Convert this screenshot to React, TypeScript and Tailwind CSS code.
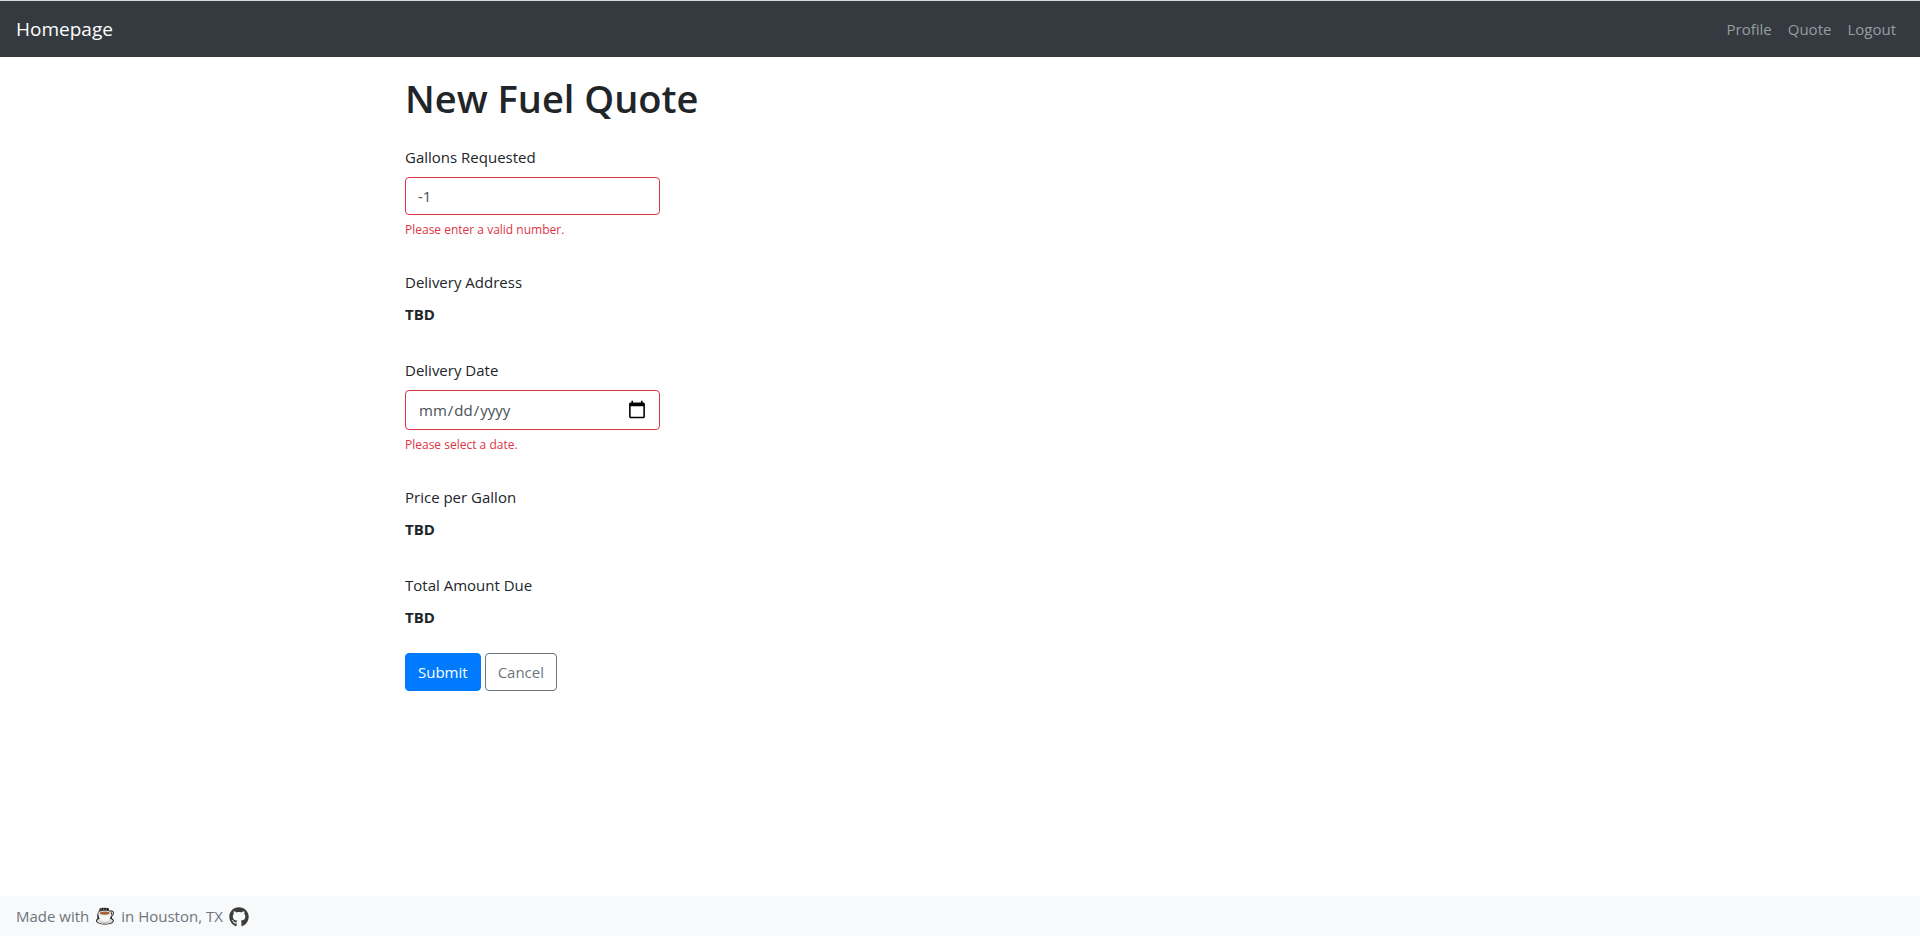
import type { ReactNode } from "react";
import { FaGithub } from "react-icons/fa";

const inputClass =
  "block w-full rounded border border-[#dc3545] bg-white px-3 text-[15px] leading-6 text-[#495057] outline-none";

function CoffeeIcon() {
  return (
    <svg viewBox="0 0 20 18" className="h-[18px] w-5" role="img" aria-label="coffee">
      <path
        d="M3 5.500 4.400 3 4.800.9l1.500.5L7.500.4l1.400.8L10.200.4l1.400.8 1.400-.5 1 1.200-.4 1.500c1.800.2 3.700-.4 4.700.8 1.300 1.600.6 4-1.500 5.600.1.800.1 1.200 0 1.500 1.500.7 2.200 1.600 2 2.700-.4 2.300-4.300 3.600-8.800 3.600S1.400 16.400 1 14.100c-.2-1.200.4-2.100 1.500-2.700C2 9.500 2.200 7.200 3 5.500Z"
        fill="#1c1c1c"
      />
      <path d="M5.500 3.200 6.300 2.100M8.200 2.800l.6-1.100M11 2.800l.6-1.100" stroke="#a5a5a5" strokeWidth=".9" />
      <ellipse cx="9.900" cy="13.800" rx="8" ry="3" fill="#dedede" />
      <path d="M14.800 5.200c1.800-.5 3-.1 2.900 1-.1 1.400-1.300 2.500-2.900 3.100" fill="none" stroke="#d5d5d5" strokeWidth="1.100" />
      <path d="M3.300 6.200c0 5.100 2.500 8.300 6.400 8.300s6.400-3.200 6.400-8.300Z" fill="#f4f4f4" />
      <ellipse cx="9.700" cy="6" rx="6.400" ry="2.600" fill="#e5e1dd" />
      <ellipse cx="9.700" cy="6.100" rx="4.900" ry="1.700" fill="#a5602f" />
      <path d="M5.500 14.700c2.300 1.100 6.500 1.100 8.800 0" fill="none" stroke="#bababa" strokeWidth=".8" />
    </svg>
  );
}

function Detail({ label, value }: { label: string; value: string }) {
  return (
    <div className="flex flex-col gap-2">
      <dt>{label}</dt>
      <dd className="font-bold">{value}</dd>
    </div>
  );
}

function Field({ id, label, error, children }: { id: string; label: string; error: string; children: ReactNode }) {
  return (
    <div>
      <label htmlFor={id} className="mb-2 block">
        {label}
      </label>
      {children}
      <p id={id + "-error"} className="mt-[6px] text-[12px] leading-[17px] text-[#dc3545]">
        {error}
      </p>
    </div>
  );
}

export default function App() {
  return (
    <div className="flex min-h-screen flex-col bg-white font-['Open_Sans',sans-serif] text-[15px] leading-6 text-[#212529]">
      <header className="border-t border-[#d5dadd] bg-[#343a40]">
        <nav className="flex h-14 items-center justify-between px-4">
          <a href="#home" className="text-[19px] leading-[30px] text-white">
            Homepage
          </a>
          <div className="flex px-2 text-[#999da0]">
            <a href="#profile" className="pr-2">Profile</a>
            <a href="#quote" className="px-2">Quote</a>
            <a href="#logout" className="pl-2">Logout</a>
          </div>
        </nav>
      </header>

      <main className="mx-auto w-full max-w-[1140px] flex-1 px-[15px] pt-4">
        <h1 className="mb-[22px] text-[38px] leading-[50px] font-semibold">New Fuel Quote</h1>
        <form noValidate onSubmit={(e) => e.preventDefault()} className="w-full max-w-[255px]">
          <div className="flex flex-col gap-8">
            <Field id="gallons" label="Gallons Requested" error="Please enter a valid number.">
              <input
                id="gallons"
                type="text"
                inputMode="numeric"
                defaultValue="-1"
                aria-invalid="true"
                aria-describedby="gallons-error"
                className={inputClass + " h-[38px]"}
              />
            </Field>
            <dl>
              <Detail label="Delivery Address" value="TBD" />
            </dl>
            <Field id="date" label="Delivery Date" error="Please select a date.">
              <input
                id="date"
                type="date"
                aria-invalid="true"
                aria-describedby="date-error"
                className={
                  inputClass +
                  " h-10 [&::-webkit-calendar-picker-indicator]:h-5 [&::-webkit-calendar-picker-indicator]:w-5 [&::-webkit-calendar-picker-indicator]:p-0"
                }
              />
            </Field>
            <dl className="flex flex-col gap-8">
              <Detail label="Price per Gallon" value="TBD" />
              <Detail label="Total Amount Due" value="TBD" />
            </dl>
          </div>
          <div className="mt-6 flex gap-1">
            <button type="submit" className="h-[38px] rounded border border-[#007bff] bg-[#007bff] px-3 text-white">
              Submit
            </button>
            <button type="button" className="h-[38px] rounded border border-[#6c757d] px-3 text-[#6c757d]">
              Cancel
            </button>
          </div>
        </form>
      </main>

      <footer className="flex h-10 items-center gap-[6px] bg-[#f8f9fa] px-4 text-[#6c757d]">
        <span>Made with</span>
        <CoffeeIcon />
        <span>in Houston, TX</span>
        <a href="#github" aria-label="GitHub" className="pt-[2px] text-[#3d3d3d]">
          <FaGithub size={20} />
        </a>
      </footer>
    </div>
  );
}
